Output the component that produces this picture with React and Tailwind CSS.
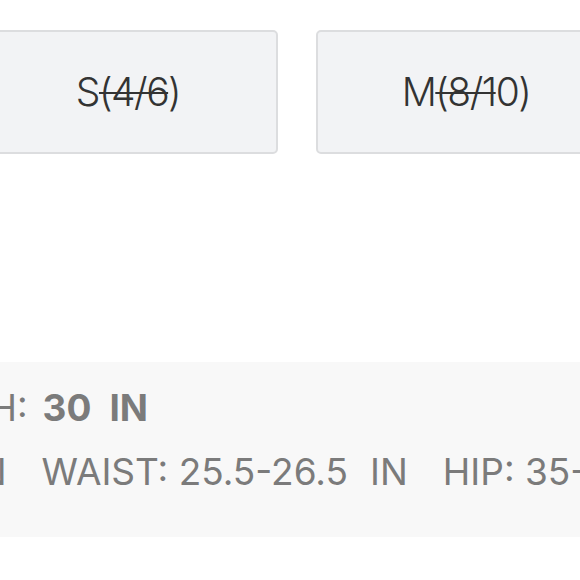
import React from 'react';

const sizes = [
  { label: 'S', struck: '(4/6', rest: ')' },
  { label: 'M', struck: '(8/1', rest: '0)' },
];

const measures = [
  { name: 'BUST', value: '32-33' },
  { name: 'WAIST', value: '25.5-26.5' },
  { name: 'HIP', value: '35-36' },
];

const SizeButton = ({ size }) => (
  <button className="flex h-[124px] w-[300px] shrink-0 items-center justify-center rounded-[5px] border-2 border-[#dcdddf] bg-[#f2f3f5] text-[39px] font-light tracking-[-1.5px] text-[#333333]">
    <span>{size.label}</span>
    <span className="line-through decoration-[2px]">{size.struck}</span>
    <span>{size.rest}</span>
  </button>
);

const App = () => {
  return (
    <div className="h-[580px] w-[580px] overflow-hidden bg-white font-['Inter',sans-serif]">
      <div className="ml-[-22px] mt-[30px] flex gap-[38px]">
        {sizes.map(size => (
          <SizeButton key={size.label} size={size} />
        ))}
      </div>

      <div className="mt-[208px] flex h-[175px] w-[640px] flex-col gap-[20px] bg-[#f8f8f8] pt-[24px] text-[37px] leading-[44px] text-[#7b7b7b]">
        <div className="ml-[-132px] flex whitespace-nowrap">
          <span>LENGTH:</span>
          <span className="ml-[15px] font-bold">30</span>
          <span className="ml-[18px] font-bold">IN</span>
        </div>
        <div className="ml-[-280px] flex gap-[35px] whitespace-nowrap">
          {measures.map(m => (
            <div key={m.name} className="flex">
              <span>{m.name}: {m.value}</span>
              <span className="ml-[22px]">IN</span>
            </div>
          ))}
        </div>
      </div>
    </div>
  );
};

export default App;
